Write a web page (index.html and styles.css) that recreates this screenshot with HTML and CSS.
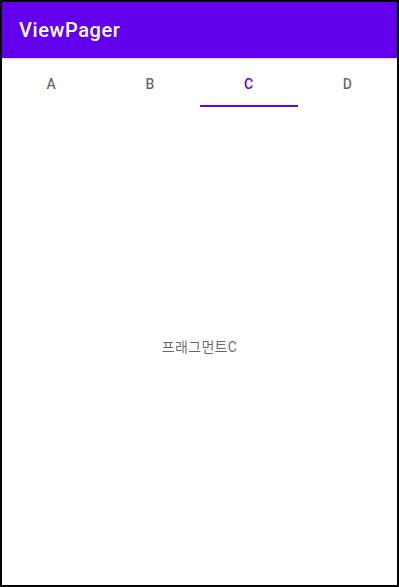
FILE: index.html
```html
<!DOCTYPE html>
<html lang="ko">
<head>
<meta charset="utf-8">
<title>ViewPager</title>
<link rel="stylesheet" href="styles.css">
</head>
<body>
<div class="frame">
  <header class="appbar">
    <h1 class="title">ViewPager</h1>
  </header>
  <nav class="tabs">
    <div class="tab">A</div>
    <div class="tab">B</div>
    <div class="tab selected">C</div>
    <div class="tab">D</div>
  </nav>
  <main class="page">
    <p class="page-text">프래그먼트C</p>
  </main>
</div>
</body>
</html>
```

FILE: styles.css
```css
html, body {
  margin: 0;
  padding: 0;
  height: 100%;
  background: #ffffff;
}

body {
  font-family: Roboto, "Noto Sans CJK KR", sans-serif;
}

.frame {
  box-sizing: border-box;
  width: 399px;
  height: 587px;
  border: 2px solid #000000;
  display: flex;
  flex-direction: column;
  background: #ffffff;
}

.appbar {
  height: 56px;
  flex: 0 0 56px;
  background: #6200ee;
  display: flex;
  align-items: center;
  padding-left: 17px;
  padding-bottom: 1px;
  box-sizing: border-box;
  position: relative;
  z-index: 1;
  box-shadow: 0 1px 2px rgba(0, 0, 0, 0.18);
}

.title {
  margin: 0;
  color: #ffffff;
  font-size: 20px;
  font-weight: 500;
  letter-spacing: 0.6px;
}

.tabs {
  height: 49px;
  flex: 0 0 49px;
  display: grid;
  grid-template-columns: repeat(4, 1fr);
}

.tab {
  display: flex;
  align-items: center;
  justify-content: center;
  font-size: 14px;
  font-weight: 500;
  letter-spacing: 0.5px;
  color: rgba(0, 0, 0, 0.6);
  padding-top: 3px;
}

.tab.selected {
  color: #6200ee;
  box-shadow: inset 0 -2px 0 #6200ee;
}

.page {
  flex: 1;
  display: flex;
  align-items: center;
  justify-content: center;
}

.page-text {
  margin: 0;
  font-size: 14px;
  letter-spacing: 0.3px;
  color: rgba(0, 0, 0, 0.6);
}
```
